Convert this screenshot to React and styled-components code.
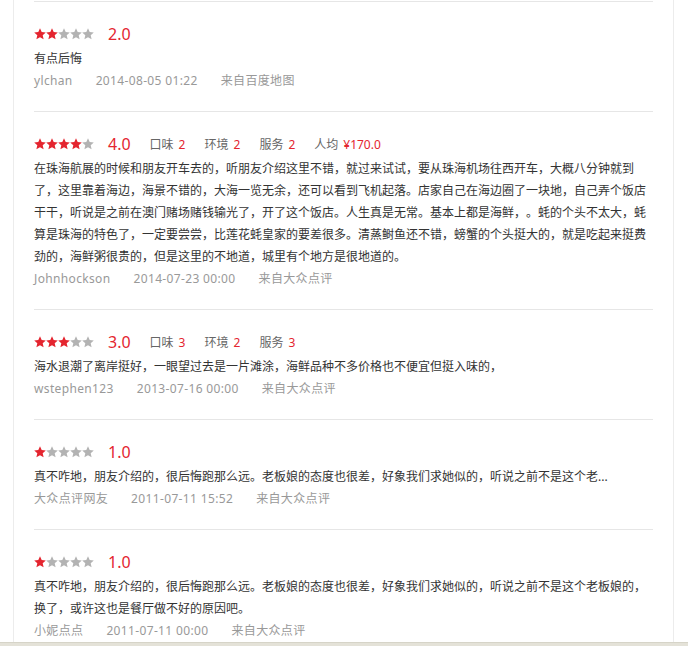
import React from "react";
import styled, { createGlobalStyle } from "styled-components";

const GlobalStyle = createGlobalStyle`
  html, body {
    margin: 0;
    padding: 0;
    background: #ffffff;
  }
  body {
    font-family: "Noto Sans", "Noto Sans CJK SC", sans-serif;
    font-size: 12px;
    color: #333;
    text-spacing-trim: space-all;
  }
`;

const Frame = styled.div`
  display: flex;
  flex-direction: column;
  height: 646px;
  width: 688px;
  overflow: hidden;
`;

const Panel = styled.div`
  flex: 1;
  min-height: 0;
  overflow: hidden;
  margin-left: 13px;
  width: 619px;
  padding: 1px 20px 0 20px;
  border-left: 1px solid #ececec;
  border-right: 1px solid #ececec;
`;

const BottomRule = styled.div`
  height: 3px;
  background: #e4e2d8;
  border-top: 1px solid #d6d4c8;
`;

const Review = styled.div`
  border-top: 1px solid #e6e6e6;
  padding: 20px 0 19px 0;
`;

const TopRow = styled.div`
  display: flex;
  align-items: center;
  height: 24px;
  margin-bottom: 2px;
`;

const Stars = styled.div`
  display: flex;
  align-items: center;
`;

const Score = styled.span`
  margin-left: 14px;
  font-size: 16px;
  color: #e4252f;
  line-height: 24px;
`;

const Subscores = styled.div`
  display: flex;
  align-items: center;
  margin-left: 19px;
  gap: 19px;
`;

const Sub = styled.span`
  color: #666;
  font-size: 12px;
  b {
    font-weight: normal;
    color: #e4252f;
    margin-left: 5px;
  }
`;

const Body = styled.p`
  margin: 0;
  line-height: 22px;
  color: #333;
  font-size: 12px;
  text-spacing-trim: space-all;
`;

const Meta = styled.div`
  display: flex;
  gap: 23px;
  line-height: 22px;
  color: #999;
  font-size: 12px;
  letter-spacing: 0.35px;
`;

const Star = ({ on }) => (
  <svg width="12" height="12" viewBox="0 0 24 24">
    <polygon
      points="12,0.5 15.4,8 23.6,8.8 17.4,14.3 19.2,22.6 12,18.3 4.8,22.6 6.6,14.3 0.4,8.8 8.6,8"
      fill={on ? "#e4252f" : "#b3b3b3"}
    />
  </svg>
);

const reviews = [
  {
    score: 2,
    text: "有点后悔",
    user: "ylchan",
    date: "2014-08-05 01:22",
    source: "来自百度地图",
  },
  {
    score: 4,
    subs: [
      ["口味", "2"],
      ["环境", "2"],
      ["服务", "2"],
      ["人均", "¥170.0"],
    ],
    text:
      "在珠海航展的时候和朋友开车去的，听朋友介绍这里不错，就过来试试，要从珠海机场往西开车，大概八分钟就到了，这里靠着海边，海景不错的，大海一览无余，还可以看到飞机起落。店家自己在海边圈了一块地，自己弄个饭店干干，听说是之前在澳门赌场赌钱输光了，开了这个饭店。人生真是无常。基本上都是海鲜，。蚝的个头不太大，蚝算是珠海的特色了，一定要尝尝，比莲花蚝皇家的要差很多。清蒸鲥鱼还不错，螃蟹的个头挺大的，就是吃起来挺费劲的，海鲜粥很贵的，但是这里的不地道，城里有个地方是很地道的。",
    user: "Johnhockson",
    date: "2014-07-23 00:00",
    source: "来自大众点评",
  },
  {
    score: 3,
    subs: [
      ["口味", "3"],
      ["环境", "2"],
      ["服务", "3"],
    ],
    text: "海水退潮了离岸挺好，一眼望过去是一片滩涂，海鲜品种不多价格也不便宜但挺入味的，",
    user: "wstephen123",
    date: "2013-07-16 00:00",
    source: "来自大众点评",
  },
  {
    score: 1,
    text: "真不咋地，朋友介绍的，很后悔跑那么远。老板娘的态度也很差，好象我们求她似的，听说之前不是这个老...",
    user: "大众点评网友",
    date: "2011-07-11 15:52",
    source: "来自大众点评",
  },
  {
    score: 1,
    text: "真不咋地，朋友介绍的，很后悔跑那么远。老板娘的态度也很差，好象我们求她似的，听说之前不是这个老板娘的，换了，或许这也是餐厅做不好的原因吧。",
    user: "小妮点点",
    date: "2011-07-11 00:00",
    source: "来自大众点评",
  },
];

const App = () => {
  return (
    <Frame>
      <GlobalStyle />
      <Panel>
        {reviews.map((r, i) => (
          <Review key={i}>
            <TopRow>
              <Stars>
                {[1, 2, 3, 4, 5].map((n) => (
                  <Star key={n} on={n <= r.score} />
                ))}
              </Stars>
              <Score>{r.score.toFixed(1)}</Score>
              {r.subs && (
                <Subscores>
                  {r.subs.map(([label, val]) => (
                    <Sub key={label}>
                      {label}
                      <b>{val}</b>
                    </Sub>
                  ))}
                </Subscores>
              )}
            </TopRow>
            <Body>{r.text}</Body>
            <Meta>
              <span>{r.user}</span>
              <span>{r.date}</span>
              <span>{r.source}</span>
            </Meta>
          </Review>
        ))}
      </Panel>
      <BottomRule />
    </Frame>
  );
};

export default App;
